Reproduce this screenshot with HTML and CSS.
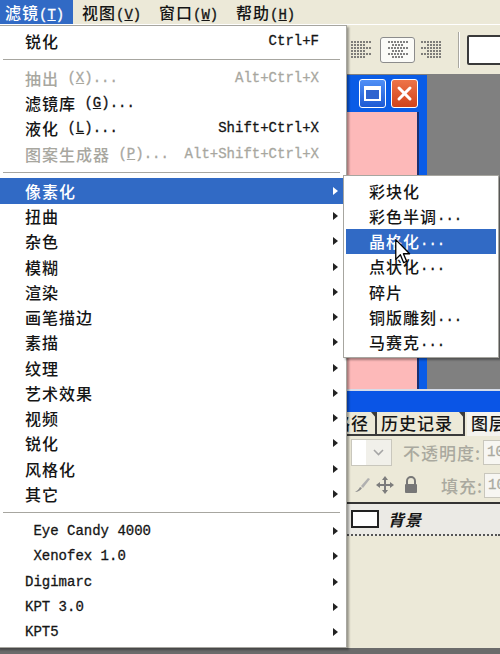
FILE: index.html
```html
<!DOCTYPE html>
<html>
<head>
<meta charset="utf-8">
<title>滤镜菜单</title>
<link rel="stylesheet" href="styles.css">
</head>
<body>
<div class="app">
	<div class="menubar">
		<span class="mb-item open">滤镜<span class="en">(<u>T</u>)</span></span>
		<span class="mb-item">视图<span class="en">(<u>V</u>)</span></span>
		<span class="mb-item">窗口<span class="en">(<u>W</u>)</span></span>
		<span class="mb-item">帮助<span class="en">(<u>H</u>)</span></span>
	</div>

	<div class="toolbar">
		<span class="al">
			<svg width="22" height="22" viewBox="0 0 22 22"><g stroke="#5a5a5a" stroke-width="1.6" stroke-dasharray="2 1"><line x1="1" y1="3" x2="21" y2="3"/><line x1="1" y1="6" x2="15" y2="6"/><line x1="1" y1="9" x2="21" y2="9"/><line x1="1" y1="12" x2="15" y2="12"/><line x1="1" y1="15" x2="21" y2="15"/><line x1="1" y1="18" x2="15" y2="18"/></g></svg>
		</span>
		<span class="al pressed">
			<svg width="22" height="22" viewBox="0 0 22 22"><g stroke="#5a5a5a" stroke-width="1.6" stroke-dasharray="2 1"><line x1="1" y1="3" x2="21" y2="3"/><line x1="5" y1="6" x2="17" y2="6"/><line x1="1" y1="9" x2="21" y2="9"/><line x1="5" y1="12" x2="17" y2="12"/><line x1="1" y1="15" x2="21" y2="15"/><line x1="5" y1="18" x2="17" y2="18"/></g></svg>
		</span>
		<span class="al">
			<svg width="22" height="22" viewBox="0 0 22 22"><g stroke="#5a5a5a" stroke-width="1.6" stroke-dasharray="2 1"><line x1="1" y1="3" x2="21" y2="3"/><line x1="7" y1="6" x2="21" y2="6"/><line x1="1" y1="9" x2="21" y2="9"/><line x1="7" y1="12" x2="21" y2="12"/><line x1="1" y1="15" x2="21" y2="15"/><line x1="7" y1="18" x2="21" y2="18"/></g></svg>
		</span>
		<span class="tb-sep"></span>
		<span class="tb-input"></span>
	</div>

	<div class="workspace">
		<div class="doc">
			<div class="doc-title">
				<span class="win-btn max">
					<svg width="17" height="15" viewBox="0 0 17 15"><rect x="1" y="1" width="15" height="13" fill="#2f63cf" stroke="#fff" stroke-width="2"/><rect x="1" y="1" width="15" height="3" fill="#fff"/></svg>
				</span>
				<span class="win-btn close">
					<svg width="17" height="17" viewBox="0 0 17 17"><g stroke="#fff" stroke-width="3" stroke-linecap="round"><line x1="3" y1="3" x2="14" y2="14"/><line x1="14" y1="3" x2="3" y2="14"/></g></svg>
				</span>
			</div>
			<div class="doc-body"></div>
		</div>
	</div>

	<div class="panel">
		<div class="panel-title"></div>
		<div class="tabs">
			<span class="tab path">路径</span>
			<span class="tab hist">历史记录</span>
			<span class="tab layers">图层</span>
		</div>
		<div class="prow opacity">
			<span class="combo">
				<span class="combo-field"></span>
				<span class="combo-btn">
					<svg width="11" height="7" viewBox="0 0 11 7"><polyline points="1,1 5.5,5.5 10,1" fill="none" stroke="#a5a5a5" stroke-width="1.6"/></svg>
				</span>
			</span>
			<span class="plabel">不透明度:</span>
			<span class="pinput en">10</span>
		</div>
		<div class="prow fill">
			<span class="ico brush">
				<svg width="18" height="18" viewBox="0 0 18 18"><path d="M2 16 C4 15 6 13 7 11 L9 12 C8 14 5 16 2 16 Z" fill="#8e8e8e"/><path d="M8 10 L15 2 L17 3 L10 12 Z" fill="#b0b0b0"/></svg>
			</span>
			<span class="ico move">
				<svg width="18" height="18" viewBox="0 0 18 18"><g fill="#7c7c7c"><rect x="8" y="3" width="2" height="12"/><rect x="3" y="8" width="12" height="2"/><polygon points="9,0 12,4 6,4"/><polygon points="9,18 12,14 6,14"/><polygon points="0,9 4,6 4,12"/><polygon points="18,9 14,6 14,12"/></g></svg>
			</span>
			<span class="ico lock">
				<svg width="16" height="18" viewBox="0 0 16 18"><path d="M4 8 V5 A4 4 0 0 1 12 5 V8" fill="none" stroke="#777" stroke-width="2"/><rect x="2" y="8" width="12" height="9" rx="1" fill="#777"/></svg>
			</span>
			<span class="plabel">填充:</span>
			<span class="pinput en">10</span>
		</div>
		<div class="layer">
			<span class="thumb"></span>
			<span class="lname">背景</span>
		</div>
		<div class="panel-empty"></div>
	</div>

	<div class="statusbar"></div>
</div>

<div class="menu main">
	<div class="item">锐化<span class="key en">Ctrl+F</span></div>
	<div class="sep"></div>
	<div class="item dis">抽出<span class="en">&nbsp;(<u>X</u>)...</span><span class="key en">Alt+Ctrl+X</span></div>
	<div class="item">滤镜库<span class="en">&nbsp;(<u>G</u>)...</span></div>
	<div class="item">液化<span class="en">&nbsp;(<u>L</u>)...</span><span class="key en">Shift+Ctrl+X</span></div>
	<div class="item dis">图案生成器<span class="en">&nbsp;(<u>P</u>)...</span><span class="key en">Alt+Shift+Ctrl+X</span></div>
	<div class="sep"></div>
	<div class="item hl">像素化<i class="arr"></i></div>
	<div class="item">扭曲<i class="arr"></i></div>
	<div class="item">杂色<i class="arr"></i></div>
	<div class="item">模糊<i class="arr"></i></div>
	<div class="item">渲染<i class="arr"></i></div>
	<div class="item">画笔描边<i class="arr"></i></div>
	<div class="item">素描<i class="arr"></i></div>
	<div class="item">纹理<i class="arr"></i></div>
	<div class="item">艺术效果<i class="arr"></i></div>
	<div class="item">视频<i class="arr"></i></div>
	<div class="item">锐化<i class="arr"></i></div>
	<div class="item">风格化<i class="arr"></i></div>
	<div class="item">其它<i class="arr"></i></div>
	<div class="sep"></div>
	<div class="item"><span class="en">&nbsp;Eye Candy 4000</span><i class="arr"></i></div>
	<div class="item"><span class="en">&nbsp;Xenofex 1.0</span><i class="arr"></i></div>
	<div class="item"><span class="en">Digimarc</span><i class="arr"></i></div>
	<div class="item"><span class="en">KPT 3.0</span><i class="arr"></i></div>
	<div class="item"><span class="en">KPT5</span><i class="arr"></i></div>
</div>

<div class="menu sub">
	<div class="item">彩块化</div>
	<div class="item">彩色半调<span class="en">...</span></div>
	<div class="item hl">晶格化<span class="en">...</span></div>
	<div class="item">点状化<span class="en">...</span></div>
	<div class="item">碎片</div>
	<div class="item">铜版雕刻<span class="en">...</span></div>
	<div class="item">马赛克<span class="en">...</span></div>
</div>

<svg class="cursor" width="16" height="25" viewBox="0 0 12 19"><path d="M0.5 0.5 L0.5 15.5 L4 12 L6.5 18 L8.8 17 L6.3 11.2 L11 11.2 Z" fill="#fff" stroke="#000" stroke-width="1" stroke-linejoin="round"/></svg>
</body>
</html>
```

FILE: styles.css
```css
*{
	margin:0;
	padding:0;
	box-sizing:border-box;
	}
body{
	width:500px;
	height:654px;
	overflow:hidden;
	position:relative;
	background:#ece9d8;
	font-family:"Noto Sans CJK SC", sans-serif;
	font-size:16px;
	font-weight:500;
	color:#151515;
	}
.en{
	font-family:"Liberation Mono", monospace;
	font-size:14px;
	letter-spacing:0;
	-webkit-text-stroke:0.3px currentColor;
	}
.app{
	display:flex;
	flex-direction:column;
	height:654px;
	}

/* menubar */
.menubar{
	height:25px;
	border-bottom:1px solid #fff;
	display:flex;
	}
.mb-item{
	width:73px;
	margin-right:4px;
	padding-left:5px;
	line-height:24px;
	letter-spacing:1px;
	white-space:nowrap;
	}
.mb-item.open{
	background:#316ac5;
	color:#fff;
	}

/* toolbar */
.toolbar{
	height:49px;
	display:flex;
	align-items:center;
	padding-left:350px;
	}
.toolbar > *{ flex-shrink:0;}
.al{
	width:22px;
	height:22px;
	display:flex;
	align-items:center;
	justify-content:center;
	}
.al.pressed{
	width:35px;
	height:26px;
	margin:0 5px 0 8px;
	background:#fbfbf8;
	border:1px solid #8c8c8c;
	border-radius:3px;
	}
.tb-sep{
	width:2px;
	height:36px;
	background:#a9a7a0;
	border-right:1px solid #fff;
	margin:0 7px 0 16px;
	}
.tb-input{
	width:50px;
	height:30px;
	border:2px solid #3a3a3a;
	border-radius:2px;
	background:#fff;
	}

/* workspace with document window */
.workspace{
	height:315px;
	background:#808080;
	display:flex;
	padding:1px 0 0 250px;
	}
.doc{
	width:177px;
	background:#0a5ce6;
	display:flex;
	flex-direction:column;
	}
.doc-title{
	height:37px;
	display:flex;
	justify-content:flex-end;
	align-items:center;
	gap:5px;
	padding-right:9px;
	}
.win-btn{
	width:27px;
	height:29px;
	border:1px solid #fff;
	border-radius:3px;
	display:flex;
	align-items:center;
	justify-content:center;
	}
.win-btn.max{ background:linear-gradient(#5190f6,#1c59d4);}
.win-btn.close{ background:linear-gradient(#ee7448,#d1431b);}
.doc-body{
	flex:1;
	background:#fdb9b9;
	margin:0 8px 0 4px;
	border-right:2px solid #1b2f70;
	}

/* layers panel */
.panel{
	height:259px;
	display:flex;
	flex-direction:column;
	border-top:2px solid #d5dcea;
	}
.panel-title{
	height:21px;
	background:#0a55e6;
	}
.tabs{
	height:24px;
	display:flex;
	padding-left:317px;
	overflow:hidden;
	}
.tab{
	position:relative;
	height:24px;
	border-right:2px solid #3a3a3a;
	border-bottom:2px solid #3a3a3a;
	font-size:17px;
	letter-spacing:1px;
	line-height:22px;
	padding-left:4px;
	white-space:nowrap;
	flex-shrink:0;
	}
.tab:after{
	content:"";
	position:absolute;
	top:0;
	right:-2px;
	border-top:7px solid #3a3a3a;
	border-left:6px solid transparent;
	}
.tab.path{
	width:60px;
	text-align:right;
	padding-right:6px;
	}
.tab.hist{ width:88px;}
.tab.layers{
	width:40px;
	margin-left:2px;
	border:none;
	background:#f4f3ee;
	}
.tab.layers:after{ display:none;}

.prow{
	display:flex;
	align-items:center;
	padding-left:351px;
	}
.prow > *{ flex-shrink:0;}
.prow.opacity{ height:32px;}
.prow.fill{ height:34px;}
.combo{
	display:flex;
	width:41px;
	height:27px;
	border:1px solid #c9c7bd;
	}
.combo-field{
	flex:1;
	background:#fff;
	}
.combo-btn{
	width:25px;
	background:#f1f0ea;
	display:flex;
	align-items:center;
	justify-content:center;
	}
.plabel{
	color:#aaa99f;
	font-size:17px;
	letter-spacing:1px;
	white-space:nowrap;
	}
.opacity .plabel{
	margin-left:11px;
	width:80px;
	}
.fill .plabel{
	margin-left:20px;
	width:43px;
	}
.pinput{
	width:17px;
	height:25px;
	line-height:23px;
	padding-left:3px;
	border:1px solid #c9c7bd;
	border-right:none;
	background:#f7f6f2;
	color:#aaa99f;
	overflow:hidden;
	}
.ico{
	display:flex;
	align-items:center;
	justify-content:center;
	}
.ico.brush{ margin-left:2px; width:18px;}
.ico.move{ margin-left:5px; width:18px;}
.ico.lock{ margin-left:7px; width:20px;}

.layer{
	height:34px;
	border-top:2px solid #333;
	border-bottom:2px dotted #555;
	display:flex;
	align-items:center;
	padding-left:351px;
	background:#ebeae5;
	}
.thumb{
	width:28px;
	height:18px;
	border:2px solid #222;
	background:#fff;
	}
.lname{
	margin-left:9px;
	font-style:italic;
	font-weight:bold;
	letter-spacing:1px;
	}
.panel-empty{ flex:1;}
.statusbar{
	height:6px;
	background:#6b6b6b;
	}

/* menus */
.menu{
	position:absolute;
	background:#fff;
	border:1px solid #a7a6a0;
	box-shadow:2px 2px 2px rgba(0,0,0,.35);
	}
.main{
	left:-3px;
	top:25px;
	width:350px;
	padding:2px 3px 2px 2px;
	}
.sub{
	left:343px;
	top:175px;
	width:156px;
	padding:2px;
	}
.item{
	height:25.25px;
	display:flex;
	align-items:center;
	padding-left:25px;
	white-space:nowrap;
	letter-spacing:1px;
	}
.sub .item{ padding-left:23px;}
.item.hl{
	background:#316ac5;
	color:#fff;
	}
.item.dis{ color:#a8a79f;}
.key{
	margin-left:auto;
	margin-right:24px;
	}
.arr{
	margin-left:auto;
	margin-right:5px;
	width:0;
	height:0;
	border-left:5px solid #222;
	border-top:4.5px solid transparent;
	border-bottom:4.5px solid transparent;
	}
.hl .arr{ border-left-color:#fff;}
.sep{
	height:12px;
	display:flex;
	align-items:center;
	padding:0 3px;
	}
.sep:before{
	content:"";
	flex:1;
	height:1px;
	background:#a7a6a0;
	}
.cursor{
	position:absolute;
	left:395px;
	top:239px;
	}
```
